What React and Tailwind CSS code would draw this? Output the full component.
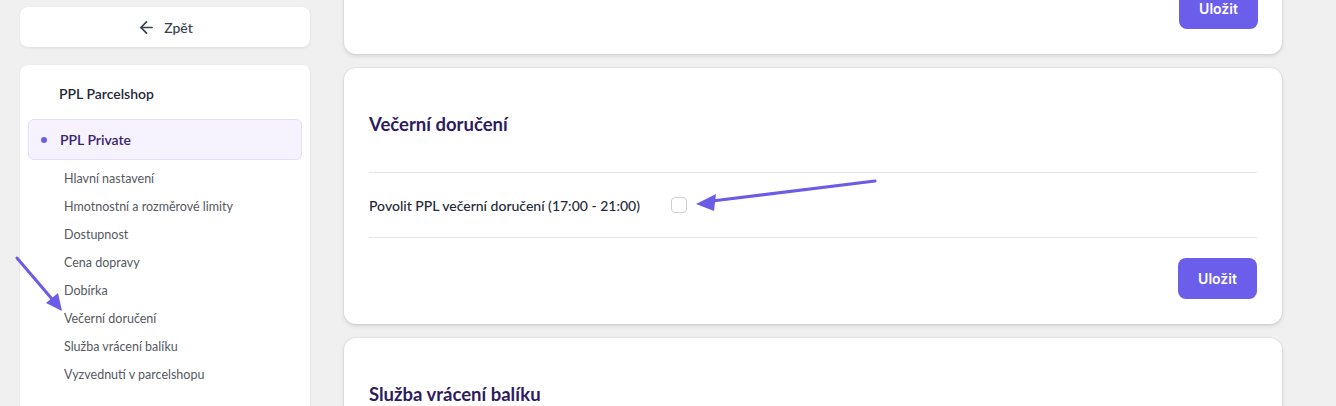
import { ArrowLeft } from 'lucide-react';

const subItems = [
  'Hlavní nastavení',
  'Hmotnostní a rozměrové limity',
  'Dostupnost',
  'Cena dopravy',
  'Dobírka',
  'Večerní doručení',
  'Služba vrácení balíku',
  'Vyzvednutí v parcelshopu',
];

function SaveButton() {
  return (
    <button className="h-[41px] w-[79px] rounded-lg bg-[#6b5eeb] text-white text-[14px] font-semibold font-['Inter',sans-serif]">
      Uložit
    </button>
  );
}

export default function App() {
  return (
    <div className="relative h-[406px] overflow-hidden bg-[#f0f0f0] font-['Segoe_UI','Lato',sans-serif]">
      <div className="flex gap-[34px] pl-[20px]">
        {/* Sidebar */}
        <aside className="w-[290px] flex flex-col">
          <button className="mt-[7px] h-[40px] bg-white rounded-lg shadow-[0_1px_3px_rgba(0,0,0,0.08)] flex items-center justify-center gap-[8px] text-[#374151] text-[14px] font-medium">
            <ArrowLeft size={19} strokeWidth={2.2} />
            <span>Zpět</span>
          </button>

          <nav className="mt-[18px] bg-white rounded-lg shadow-[0_1px_3px_rgba(0,0,0,0.08)] p-[8px] pb-[40px]">
            <div className="h-[41px] flex items-center pl-[31px] text-[14px] font-semibold text-[#1f2937]">
              PPL Parcelshop
            </div>
            <div className="mt-[5px] h-[41px] flex items-center gap-[13px] pl-[12px] rounded-md border border-[#e6dcfb] bg-[#f6f3fe] text-[14px] font-semibold text-[#3a226e]">
              <span className="w-[6px] h-[6px] rounded-full bg-[#6b5eeb]" />
              PPL Private
            </div>
            <ul className="mt-[5px]">
              {subItems.map((item) => (
                <li key={item} className="h-[28px] flex items-center pl-[36px] text-[12.5px] text-[#55595f]">
                  {item}
                </li>
              ))}
            </ul>
          </nav>
        </aside>

        {/* Main */}
        <main className="w-[938px] flex flex-col gap-[14px]">
          <section className="-mt-[12px] bg-white rounded-b-xl shadow-[0_0_0_1px_rgba(0,0,0,0.03),0_2px_4px_rgba(0,0,0,0.12)] px-[24px] pb-[25px] flex justify-end">
            <SaveButton />
          </section>

          <section className="bg-white rounded-xl shadow-[0_0_0_1px_rgba(0,0,0,0.04),0_2px_4px_rgba(0,0,0,0.12)] px-[25px] pt-[43px] pb-[25px]">
            <h2 className="h-[28px] flex items-center text-[18.5px] font-bold text-[#2d1b5e]">Večerní doručení</h2>
            <div className="mt-[33px] border-t border-b border-[#e5e5e5] h-[66px] flex items-center">
              <label className="w-[302px] text-[14px] font-medium text-[#1f2937]">
                Povolit PPL večerní doručení (17:00 - 21:00)
              </label>
              <span className="w-[16px] h-[16px] rounded-[4px] border border-[#cfcfd4] bg-white" />
            </div>
            <div className="mt-[20px] flex justify-end">
              <SaveButton />
            </div>
          </section>

          <section className="bg-white rounded-xl shadow-[0_0_0_1px_rgba(0,0,0,0.04),0_2px_4px_rgba(0,0,0,0.12)] px-[25px] pt-[43px] pb-[24px] h-[200px]">
            <h2 className="h-[28px] flex items-center text-[18.5px] font-bold text-[#2d1b5e]">Služba vrácení balíku</h2>
          </section>
        </main>
      </div>

      {/* Annotation arrows */}
      <svg className="absolute inset-0 pointer-events-none" width="1336" height="406">
        <line x1="875" y1="181" x2="712" y2="201" stroke="#6b5ce7" strokeWidth="3" strokeLinecap="round" />
        <polygon points="696,204 716,194 714,211" fill="#6b5ce7" />
        <line x1="17" y1="258" x2="52" y2="299" stroke="#6b5ce7" strokeWidth="3" strokeLinecap="round" />
        <polygon points="62,311 46,303 58,293" fill="#6b5ce7" />
      </svg>
    </div>
  );
}
